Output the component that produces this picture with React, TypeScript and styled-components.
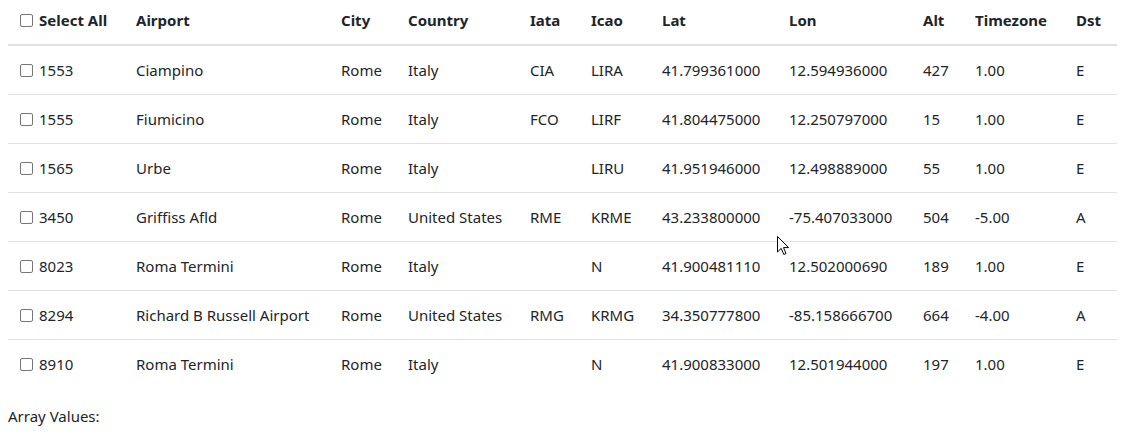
import { createGlobalStyle, styled } from 'styled-components'

const GlobalStyle = createGlobalStyle`
  html, body {
    margin: 0;
    padding: 0;
    background: #fff;
    overflow: hidden;
  }
  body {
    font-family: 'Noto Sans', 'Open Sans', sans-serif;
    font-size: 15px;
    line-height: 24px;
    color: #212529;
  }
`

const Page = styled.div`
  position: relative;
  padding-left: 8px;
  margin-top: -5px;
`

const Table = styled.table`
  width: 1109px;
  table-layout: fixed;
  border-collapse: collapse;
  margin-bottom: 16px;
`

const Th = styled.th`
  text-align: left;
  font-weight: 700;
  padding: 12px;
  height: 24px;
  border-top: 1px solid #dee2e6;
  border-bottom: 2px solid #dee2e6;
  white-space: nowrap;
  vertical-align: top;
`

const Td = styled.td`
  padding: 12px;
  height: 24px;
  border-top: 1px solid #dee2e6;
  white-space: nowrap;
  vertical-align: top;
`

const CheckLabel = styled.label`
  display: flex;
  align-items: center;
  gap: 6px;
  height: 24px;
`

const Check = styled.input`
  appearance: none;
  margin: 0;
  width: 13px;
  height: 13px;
  border: 1px solid #767676;
  border-radius: 2px;
  background: #fff;
`

const Footer = styled.div`
  font-size: 15px;
`

const Cursor = styled.svg`
  position: absolute;
  left: 777px;
  top: 241px;
  pointer-events: none;
`

const widths = [116, 205, 67, 122, 61, 71, 127, 134, 52, 101, 53]
const headers = ['Airport', 'City', 'Country', 'Iata', 'Icao', 'Lat', 'Lon', 'Alt', 'Timezone', 'Dst']

const rows = [
  ['1553', 'Ciampino', 'Rome', 'Italy', 'CIA', 'LIRA', '41.799361000', '12.594936000', '427', '1.00', 'E'],
  ['1555', 'Fiumicino', 'Rome', 'Italy', 'FCO', 'LIRF', '41.804475000', '12.250797000', '15', '1.00', 'E'],
  ['1565', 'Urbe', 'Rome', 'Italy', '', 'LIRU', '41.951946000', '12.498889000', '55', '1.00', 'E'],
  ['3450', 'Griffiss Afld', 'Rome', 'United States', 'RME', 'KRME', '43.233800000', '-75.407033000', '504', '-5.00', 'A'],
  ['8023', 'Roma Termini', 'Rome', 'Italy', '', 'N', '41.900481110', '12.502000690', '189', '1.00', 'E'],
  ['8294', 'Richard B Russell Airport', 'Rome', 'United States', 'RMG', 'KRMG', '34.350777800', '-85.158666700', '664', '-4.00', 'A'],
  ['8910', 'Roma Termini', 'Rome', 'Italy', '', 'N', '41.900833000', '12.501944000', '197', '1.00', 'E'],
]

export default function App() {
  return (
    <Page>
      <GlobalStyle />
      <Table>
        <colgroup>
          {widths.map((w, i) => (
            <col key={i} style={{ width: w }} />
          ))}
        </colgroup>
        <thead>
          <tr>
            <Th>
              <CheckLabel>
                <Check type='checkbox' />
                Select All
              </CheckLabel>
            </Th>
            {headers.map(h => (
              <Th key={h}>{h}</Th>
            ))}
          </tr>
        </thead>
        <tbody>
          {rows.map(r => (
            <tr key={r[0]}>
              <Td>
                <CheckLabel>
                  <Check type='checkbox' />
                  {r[0]}
                </CheckLabel>
              </Td>
              {r.slice(1).map((v, i) => (
                <Td key={i}>{v}</Td>
              ))}
            </tr>
          ))}
        </tbody>
      </Table>
      <Footer>Array Values:</Footer>
      <Cursor width='13' height='20' viewBox='0 0 13 20'>
        <path d='M0.5 0.5 L0.5 16 L4.2 12.4 L6.8 18.5 L9 17.5 L6.5 11.6 L11.6 11.6 Z' fill='#fff' stroke='#000' strokeWidth='1' strokeLinejoin='round' />
      </Cursor>
    </Page>
  )
}
